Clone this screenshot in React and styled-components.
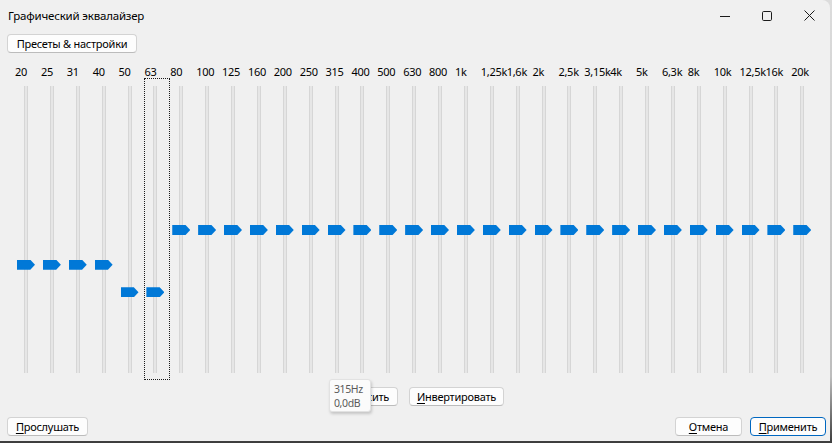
import React from 'react';
import styled, { createGlobalStyle } from 'styled-components';

const GlobalStyle = createGlobalStyle`
    html, body {
        margin:0;
        padding:0;
        width:832px;
        height:443px;
        overflow:hidden;
        background:linear-gradient(to bottom, #dcdcdc 0%, #bdbdbd 85%, #3c3c3c 100%);
        font-family:"Noto Sans", "Liberation Sans", sans-serif;
        font-size:11px;
        letter-spacing:-0.25px;
        color:#000;
    }
`;

const Window = styled.div`
    position:relative;
    width:830px;
    height:441px;
    background-color:#f0f0f0;
    border-top-right-radius:8px;
    display:flex;
    flex-direction:column;
    overflow:hidden;
`;

const TitleBar = styled.div`
    height:31px;
    display:flex;
    align-items:center;
    padding-left:8px;
    flex-shrink:0;
`;

const Title = styled.div`
    flex:1;
    font-size:11.5px;
    letter-spacing:-0.2px;
`;

const WinBtn = styled.div`
    width:42px;
    height:31px;
    display:flex;
    justify-content:center;
    align-items:center;
`;

const Toolbar = styled.div`
    display:flex;
    padding:3px 7px 0;
`;

const Button = styled.button`
    width:${props => props.$w}px;
    height:19px;
    padding:0;
    margin:0;
    box-sizing:border-box;
    background-color:#fdfdfd;
    border:1px solid ${props => props.$primary ? '#0067c0' : '#d3d3d3'};
    border-bottom-color:${props => props.$primary ? '#0067c0' : '#bcbcbc'};
    border-radius:4px;
    font-family:inherit;
    font-size:11px;
    letter-spacing:-0.25px;
    line-height:16px;
    color:#000;
    display:flex;
    justify-content:center;
    align-items:center;
`;

const Key = styled.span`
    text-decoration:underline;
    text-underline-offset:2px;
`;

const Bands = styled.div`
    display:grid;
    grid-template-columns:repeat(31, 25.875px);
    padding-left:15px;
    margin-top:10px;
`;

const Band = styled.div`
    display:flex;
    flex-direction:column;
`;

const Label = styled.div`
    height:15px;
    line-height:17px;
    white-space:nowrap;
    overflow:visible;
`;

const Slider = styled.div`
    position:relative;
    width:26px;
    height:302px;
    box-sizing:border-box;
    border:1px dotted ${props => props.$focused ? '#1a1a1a' : 'transparent'};
`;

const Track = styled.div`
    position:absolute;
    left:8px;
    top:7px;
    width:4px;
    height:287px;
    box-sizing:border-box;
    background-color:#e6e6e6;
    border-left:1px solid #d6d6d6;
    border-right:1px solid #d6d6d6;
`;

const Thumb = styled.div`
    position:absolute;
    left:1px;
    width:18px;
    height:10px;
    background-color:#0078d7;
    clip-path:polygon(0 0, 74% 0, 100% 50%, 74% 100%, 0 100%);
`;

const MiddleRow = styled.div`
    display:flex;
    justify-content:center;
    gap:11px;
    padding-left:6px;
    margin-top:7px;
`;

const BottomRow = styled.div`
    display:flex;
    align-items:center;
    padding:0 4px 0 7px;
    margin-top:11px;
`;

const Spacer = styled.div`
    flex:1;
`;

const RightBtns = styled.div`
    display:flex;
    gap:8px;
`;

const Tooltip = styled.div`
    position:absolute;
    left:329px;
    top:379px;
    width:42px;
    height:33px;
    box-sizing:border-box;
    padding:2px 0 0 4px;
    background-color:#fbfbfb;
    border:1px solid #e2e2e2;
    border-radius:3px;
    box-shadow:1px 2px 3px rgba(0, 0, 0, 0.18);
    color:#5a5a5a;
    font-size:10.5px;
    letter-spacing:-0.4px;
    line-height:14px;
`;

const bands = [
    ['20', -3], ['25', -3], ['31', -3], ['40', -3], ['50', -5.4], ['63', -5.4],
    ['80', 0], ['100', 0], ['125', 0], ['160', 0], ['200', 0], ['250', 0],
    ['315', 0], ['400', 0], ['500', 0], ['630', 0], ['800', 0], ['1k', 0],
    ['1,25k', 0], ['1,6k', 0], ['2k', 0], ['2,5k', 0], ['3,15k', 0], ['4k', 0],
    ['5k', 0], ['6,3k', 0], ['8k', 0], ['10k', 0], ['12,5k', 0], ['16k', 0], ['20k', 0],
];

// 277px of travel for +-12 dB
const dbToTop = db => 151 - 5 - db * (277 / 24);

const App = () => {
    return (
        <>
            <GlobalStyle />
            <Window>
                <TitleBar>
                    <Title>Графический эквалайзер</Title>
                    <WinBtn>
                        <svg width="10" height="10" viewBox="0 0 10 10">
                            <path d="M0 5.5h10" stroke="#1b1b1b" strokeWidth="1" />
                        </svg>
                    </WinBtn>
                    <WinBtn>
                        <svg width="10" height="10" viewBox="0 0 10 10">
                            <rect x="0.5" y="0.5" width="9" height="9" rx="1.2" fill="none" stroke="#1b1b1b" strokeWidth="1" />
                        </svg>
                    </WinBtn>
                    <WinBtn>
                        <svg width="11" height="11" viewBox="0 0 11 11">
                            <path d="M0.5 0.5l10 10M10.5 0.5l-10 10" stroke="#1b1b1b" strokeWidth="1" />
                        </svg>
                    </WinBtn>
                </TitleBar>

                <Toolbar>
                    <Button $w={130}>Пресеты &amp; настройки</Button>
                </Toolbar>

                <Bands>
                    {bands.map(([label, db], i) => (
                        <Band key={label}>
                            <Label>{label}</Label>
                            <Slider $focused={i === 5}>
                                <Track />
                                <Thumb style={{ top: `${dbToTop(db)}px` }} />
                            </Slider>
                        </Band>
                    ))}
                </Bands>

                <MiddleRow>
                    <Button $w={66}><span><Key>С</Key>бросить</span></Button>
                    <Button $w={95}><span><Key>И</Key>нвертировать</span></Button>
                </MiddleRow>

                <BottomRow>
                    <Button $w={81}><span><Key>П</Key>рослушать</span></Button>
                    <Spacer />
                    <RightBtns>
                        <Button $w={67}><span><Key>О</Key>тмена</span></Button>
                        <Button $w={76} $primary><span><Key>П</Key>рименить</span></Button>
                    </RightBtns>
                </BottomRow>

                <Tooltip>
                    <div>315Hz</div>
                    <div>0,0dB</div>
                </Tooltip>
            </Window>
        </>
    );
};

export default App;
